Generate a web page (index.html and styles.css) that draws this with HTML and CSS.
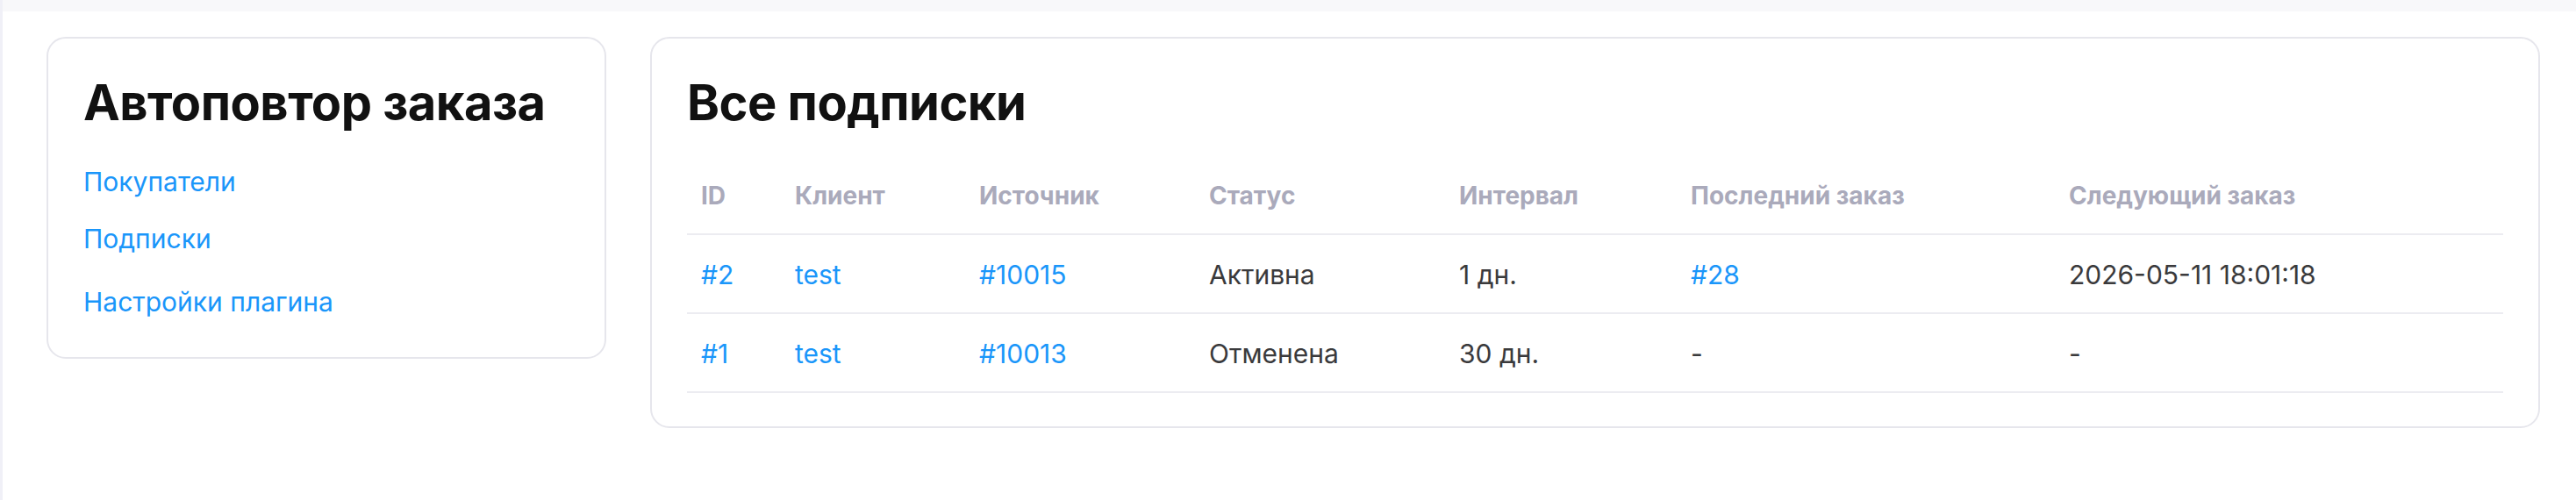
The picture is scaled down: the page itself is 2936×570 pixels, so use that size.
FILE: index.html
```html
<!DOCTYPE html>
<html lang="ru">
	<head>
		<meta charset="UTF-8">
		<title>Автоповтор заказа</title>
		<link rel="stylesheet" href="styles.css">
	</head>
	<body>
		<div class="topbar"></div>
		<div class="page">
			<div class="card sidebar">
				<h1>Автоповтор заказа</h1>
				<ul class="nav">
					<li><a href="#">Покупатели</a></li>
					<li><a href="#">Подписки</a></li>
				</ul>
				<div class="nav-settings"><a href="#">Настройки плагина</a></div>
			</div>
			<div class="card main">
				<h1>Все подписки</h1>
				<table class="subs">
					<thead>
						<tr>
							<th class="col-id">ID</th>
							<th class="col-client">Клиент</th>
							<th class="col-source">Источник</th>
							<th class="col-status">Статус</th>
							<th class="col-interval">Интервал</th>
							<th class="col-last">Последний заказ</th>
							<th class="col-next">Следующий заказ</th>
						</tr>
					</thead>
					<tbody>
						<tr>
							<td><a href="#">#2</a></td>
							<td><a href="#">test</a></td>
							<td><a href="#">#10015</a></td>
							<td>Активна</td>
							<td>1 дн.</td>
							<td><a href="#">#28</a></td>
							<td>2026-05-11 18:01:18</td>
						</tr>
						<tr>
							<td><a href="#">#1</a></td>
							<td><a href="#">test</a></td>
							<td><a href="#">#10013</a></td>
							<td>Отменена</td>
							<td>30 дн.</td>
							<td>-</td>
							<td>-</td>
						</tr>
					</tbody>
				</table>
			</div>
		</div>
	</body>
</html>
```

FILE: styles.css
```css
html,body,div,h1,ul,li{
	margin: 0;
	padding: 0;
}
body{
	background: #fff;
	border-left: 3px solid #f0f0f7;
	height: 570px;
	overflow: hidden;
	box-sizing: border-box;
	font-family: Inter, "Noto Sans", sans-serif;
	font-size: 30px;
	line-height: 45px;
	color: #3a3a3c;
}
a{
	color: #1a96fa;
	text-decoration: none;
}

.topbar{
	height: 13px;
	background: #f8f8fa;
}
.page{
	display: flex;
	align-items: flex-start;
	gap: 50px;
	padding: 29px 41px 0 50px;
}
.card{
	background: #fff;
	border: 2px solid #e6e6ec;
	border-radius: 22px;
	padding: 40px;
}
.card h1{
	font-size: 56px;
	line-height: 67px;
	font-weight: 700;
	color: #111;
	letter-spacing: -0.5px;
}
.sidebar{
	width: 638px;
	box-sizing: border-box;
}
.main{
	flex: 1;
	padding-bottom: 38px;
}

/* меню слева */
.nav{
	list-style: none;
	margin-top: 34px;
}
.nav li{
	margin-bottom: 20px;
}
.nav li:last-child{
	margin-bottom: 0;
}
.nav-settings{
	margin-top: 27px;
}

/* таблица подписок */
.subs{
	width: 100%;
	margin-top: 37px;
	border-collapse: collapse;
	table-layout: fixed;
}
.subs th,
.subs td{
	box-sizing: border-box;
	text-align: left;
	border-bottom: 2px solid #ececf1;
	white-space: nowrap;
}
.subs th{
	font-size: 28px;
	line-height: 38px;
	font-weight: 700;
	color: #aaaabb;
	padding: 16px 16px 24px;
}
.subs td{
	padding: 23px 16px 20px;
}
.col-id{ width: 107px; }
.col-client{ width: 210px; }
.col-source{ width: 262px; }
.col-status{ width: 285px; }
.col-interval{ width: 264px; }
.col-last{ width: 431px; }
```
